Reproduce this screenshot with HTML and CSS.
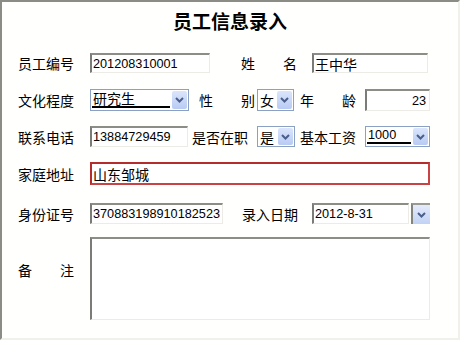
FILE: index.html
```html
<!DOCTYPE html>
<html lang="zh">
<head>
<meta charset="utf-8">
<title>员工信息录入</title>
<link rel="stylesheet" href="styles.css">
</head>
<body>
<div class="window">
  <h1 class="title">员工信息录入</h1>

  <div class="row r1">
    <span class="lbl">员工编号</span>
    <input class="field num w120" value="201208310001" readonly>
    <span class="spread ml31"><span>姓</span><span>名</span></span>
    <input class="field cjk w116 ml15" value="王中华" readonly>
  </div>

  <div class="row r2">
    <span class="lbl">文化程度</span>
    <div class="combo w99">
      <span class="ctext uline">研究生</span>
      <span class="cbtn"><svg width="9" height="6" viewBox="0 0 9 6"><path d="M1 1 L4.5 4.5 L8 1" fill="none" stroke="#4a5f8c" stroke-width="2"/></svg></span>
    </div>
    <span class="spread ml10"><span>性</span><span>别</span></span>
    <div class="combo w37 ml2">
      <span class="ctext">女</span>
      <span class="cbtn"><svg width="9" height="6" viewBox="0 0 9 6"><path d="M1 1 L4.5 4.5 L8 1" fill="none" stroke="#4a5f8c" stroke-width="2"/></svg></span>
    </div>
    <span class="spread ml6"><span>年</span><span>龄</span></span>
    <input class="field num right w65 ml9" value="23" readonly>
  </div>

  <div class="row r3">
    <span class="lbl">联系电话</span>
    <input class="field num w98" value="13884729459" readonly>
    <span class="txt ml4">是否在职</span>
    <div class="combo w38 ml9">
      <span class="ctext">是</span>
      <span class="cbtn"><svg width="9" height="6" viewBox="0 0 9 6"><path d="M1 1 L4.5 4.5 L8 1" fill="none" stroke="#4a5f8c" stroke-width="2"/></svg></span>
    </div>
    <span class="txt ml5">基本工资</span>
    <div class="combo w65 ml9">
      <span class="ctext num uline">1000</span>
      <span class="cbtn"><svg width="9" height="6" viewBox="0 0 9 6"><path d="M1 1 L4.5 4.5 L8 1" fill="none" stroke="#4a5f8c" stroke-width="2"/></svg></span>
    </div>
  </div>

  <div class="row r4">
    <span class="lbl">家庭地址</span>
    <input class="field cjk red w340" value="山东邹城" readonly>
  </div>

  <div class="row r5">
    <span class="lbl">身份证号</span>
    <input class="field num w133" value="370883198910182523" readonly>
    <span class="txt ml19">录入日期</span>
    <input class="field num w97 ml14" value="2012-8-31" readonly>
    <span class="dbtn"><svg width="9" height="6" viewBox="0 0 9 6"><path d="M1 1 L4.5 4.5 L8 1" fill="none" stroke="#4a5f8c" stroke-width="2"/></svg></span>
  </div>

  <div class="row r6">
    <span class="spread note"><span>备</span><span>注</span></span>
    <textarea class="memo" readonly></textarea>
  </div>
</div>
</body>
</html>
```

FILE: styles.css
```css
* { box-sizing: border-box; }
html, body { margin: 0; padding: 0; background: #fffffe; }
body {
  font-family: "Noto Sans CJK SC", "Liberation Sans", sans-serif;
  font-size: 14px;
  color: #000;
}
.window {
  width: 460px;
  height: 340px;
  border-top: 2px solid #8c8c86;
  border-left: 2px solid #8c8c86;
  border-right: 2px solid #f1f0ea;
  border-bottom: 2px solid #f1f0ea;
  padding-left: 16px;
  background: #fffffe;
  display: flex;
  flex-direction: column;
}
.title {
  margin: 7px 0 0 -16px;
  height: 24px;
  line-height: 24px;
  font-size: 19px;
  font-weight: bold;
  text-align: center;
}
.row {
  display: flex;
  align-items: center;
}
.r1 { margin-top: 20px; height: 20px; }
.r2 { margin-top: 16px; height: 22px; }
.r3 { margin-top: 15px; height: 21px; }
.r4 { margin-top: 15px; height: 23px; }
.r5 { margin-top: 18px; height: 21px; }
.r6 { margin-top: 13px; height: 83px; align-items: flex-start; }

.lbl { width: 72px; line-height: 20px; white-space: nowrap; }
.txt { width: 56px; line-height: 20px; white-space: nowrap; }
.spread {
  width: 56px;
  display: flex;
  justify-content: space-between;
  line-height: 20px;
}
.note { margin-top: 23px; margin-right: 16px; }

.field {
  height: 100%;
  margin: 0;
  padding: 0 2px 0 1px;
  border-style: solid;
  border-width: 2px 1px 1px 2px;
  border-color: #8d8d88 #ecebe5 #ecebe5 #7b7b77;
  background: #fff;
  color: #000;
  outline: none;
}
.num { font-family: "Liberation Sans", sans-serif; font-size: 12.7px; }
.cjk { font-family: "Noto Sans CJK SC", sans-serif; font-size: 14px; }
.right { text-align: right; padding-right: 3px; }
.red {
  border-width: 2px;
  border-color: #b52c2c #c84444 #c84444 #b52c2c;
}

.combo {
  height: 100%;
  display: flex;
  align-items: stretch;
  border: 1px solid #8aa1c4;
  padding: 1px;
  background: #fff;
}
.ctext {
  flex: 1;
  display: flex;
  align-items: center;
  padding-left: 1px;
  margin-right: 2px;
  line-height: 16px;
  white-space: nowrap;
}
.uline {
  border-bottom: 2px solid #000;
  margin-bottom: 1px;
  align-items: flex-start;
  line-height: 14px;
}
.cbtn, .dbtn {
  width: 15px;
  display: flex;
  align-items: center;
  justify-content: center;
  background: linear-gradient(#dbe5fb, #b8cbf3);
  border-radius: 2px;
}
.dbtn {
  width: 19px;
  height: 100%;
  margin-left: 2px;
  border-top: 2px solid #9a9a94;
  border-left: 2px solid #84847f;
  border-radius: 0;
  background: linear-gradient(#e4ebfb, #c2d2f5);
}

.memo {
  width: 340px;
  height: 83px;
  margin: 0;
  resize: none;
  border-style: solid;
  border-width: 2px 1px 1px 2px;
  border-color: #8d8d88 #ecebe5 #ecebe5 #7b7b77;
  background: #fff;
  outline: none;
}

.w37 { width: 37px; } .w38 { width: 38px; } .w65 { width: 65px; }
.w97 { width: 97px; } .w98 { width: 98px; } .w99 { width: 99px; }
.w116 { width: 116px; } .w120 { width: 120px; } .w133 { width: 133px; }
.w340 { width: 340px; }
.ml2 { margin-left: 2px; } .ml4 { margin-left: 4px; } .ml5 { margin-left: 5px; }
.ml6 { margin-left: 6px; } .ml9 { margin-left: 9px; } .ml10 { margin-left: 10px; }
.ml14 { margin-left: 14px; } .ml15 { margin-left: 15px; } .ml19 { margin-left: 19px; }
.ml31 { margin-left: 31px; }
```
